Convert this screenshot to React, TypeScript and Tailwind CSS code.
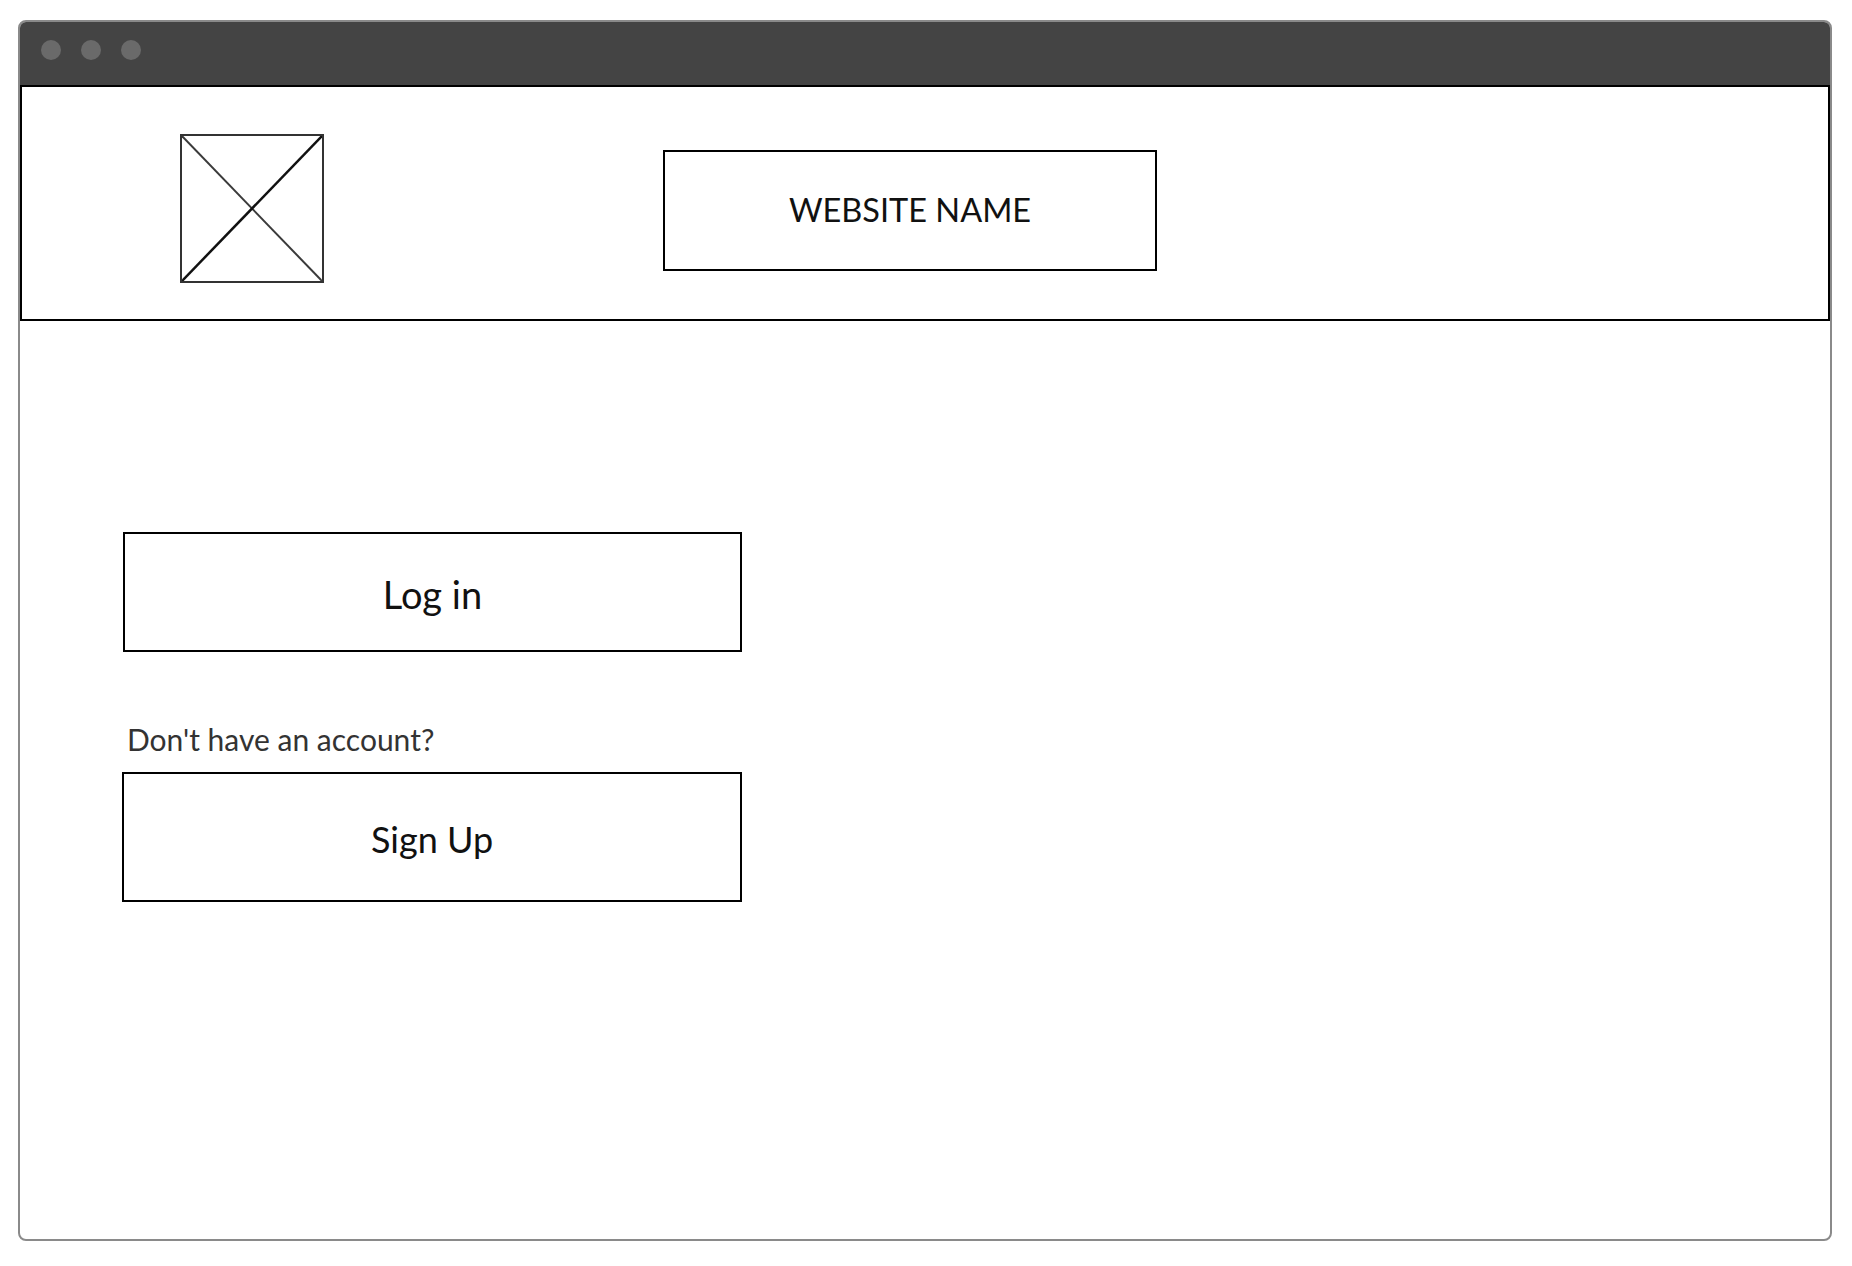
import React from "react";

export default function App() {
  const font = { fontFamily: "Lato, 'Open Sans', sans-serif" };
  return (
    <div className="w-[1852px] h-[1266px] bg-white pt-[20px] pl-[18px]" style={font}>
      <div className="w-[1814px] h-[1221px] border-2 border-[#8a8a8a] rounded-[8px] overflow-hidden flex flex-col bg-white">
        {/* title bar */}
        <div className="h-[63px] bg-[#444444] flex items-start gap-[20px] pl-[21px] pt-[18px] shrink-0">
          <div className="w-[20px] h-[20px] rounded-full bg-[#6a6a6a]" />
          <div className="w-[20px] h-[20px] rounded-full bg-[#6a6a6a]" />
          <div className="w-[20px] h-[20px] rounded-full bg-[#6a6a6a]" />
        </div>
        {/* header */}
        <div className="h-[236px] border-2 border-black flex items-start shrink-0">
          <div className="ml-[158px] mt-[47px] w-[144px] h-[149px] border-2 border-[#333] relative">
            <svg className="absolute inset-0" width="140" height="145" viewBox="0 0 140 145">
              <line x1="0" y1="0" x2="140" y2="145" stroke="#3a3a3a" strokeWidth="2" />
              <line x1="0" y1="145" x2="140" y2="0" stroke="#111" strokeWidth="2.5" />
            </svg>
          </div>
          <div className="ml-[339px] mt-[63px] w-[494px] h-[121px] border-2 border-black flex items-center justify-center">
            <span className="text-[32.5px] leading-none text-[#111]">WEBSITE NAME</span>
          </div>
        </div>
        {/* body */}
        <div className="flex flex-col items-start pt-[211px] pl-[103px]">
          <div className="w-[619px] h-[120px] border-2 border-black flex items-center justify-center">
            <span className="mt-[3px] text-[38px] leading-none text-[#111]">Log in</span>
          </div>
          <div className="mt-[70px] ml-[4px] h-[34px] text-[30px] leading-[34px] text-[#333]">Don't have an account?</div>
          <div className="mt-[16px] -ml-[1px] w-[620px] h-[130px] border-2 border-black flex items-center justify-center">
            <span className="mt-[3px] text-[36px] leading-none text-[#111]">Sign Up</span>
          </div>
        </div>
      </div>
    </div>
  );
}
